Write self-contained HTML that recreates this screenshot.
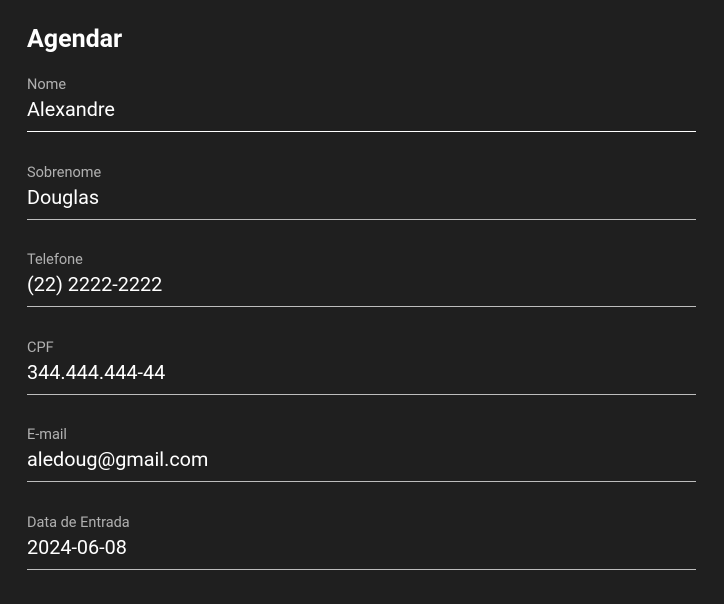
<!DOCTYPE html>
<html><head><meta charset="utf-8"><style>
html,body{margin:0;padding:0;background:#1f1f1f;width:724px;height:604px;overflow:hidden;font-family:"Roboto","Liberation Sans",Arial,sans-serif;}
.t{position:absolute;left:27px;top:24px;font-size:25px;font-weight:bold;color:#fff;line-height:32px;}
.f{position:absolute;left:27px;width:669px;height:88px;}
.l{position:absolute;left:0;top:0;font-size:14.5px;color:#b0b0b0;line-height:16px;}
.v{position:absolute;left:0;top:21px;font-size:19.8px;color:#fff;line-height:24px;}
.u{position:absolute;left:0;top:54px;width:669px;height:1px;background:#bdbdbd;}
</style></head><body>
<div class="t">Agendar</div>
<div class="f" style="top:77px"><div class="l">Nome</div><div class="v">Alexandre</div><div class="u" style="background:#fff"></div></div>
<div class="f" style="top:165px"><div class="l">Sobrenome</div><div class="v">Douglas</div><div class="u"></div></div>
<div class="f" style="top:252px"><div class="l">Telefone</div><div class="v">(22) 2222-2222</div><div class="u"></div></div>
<div class="f" style="top:340px"><div class="l">CPF</div><div class="v">344.444.444-44</div><div class="u"></div></div>
<div class="f" style="top:427px"><div class="l">E-mail</div><div class="v">aledoug@gmail.com</div><div class="u"></div></div>
<div class="f" style="top:515px"><div class="l">Data de Entrada</div><div class="v">2024-06-08</div><div class="u"></div></div>
</body></html>
